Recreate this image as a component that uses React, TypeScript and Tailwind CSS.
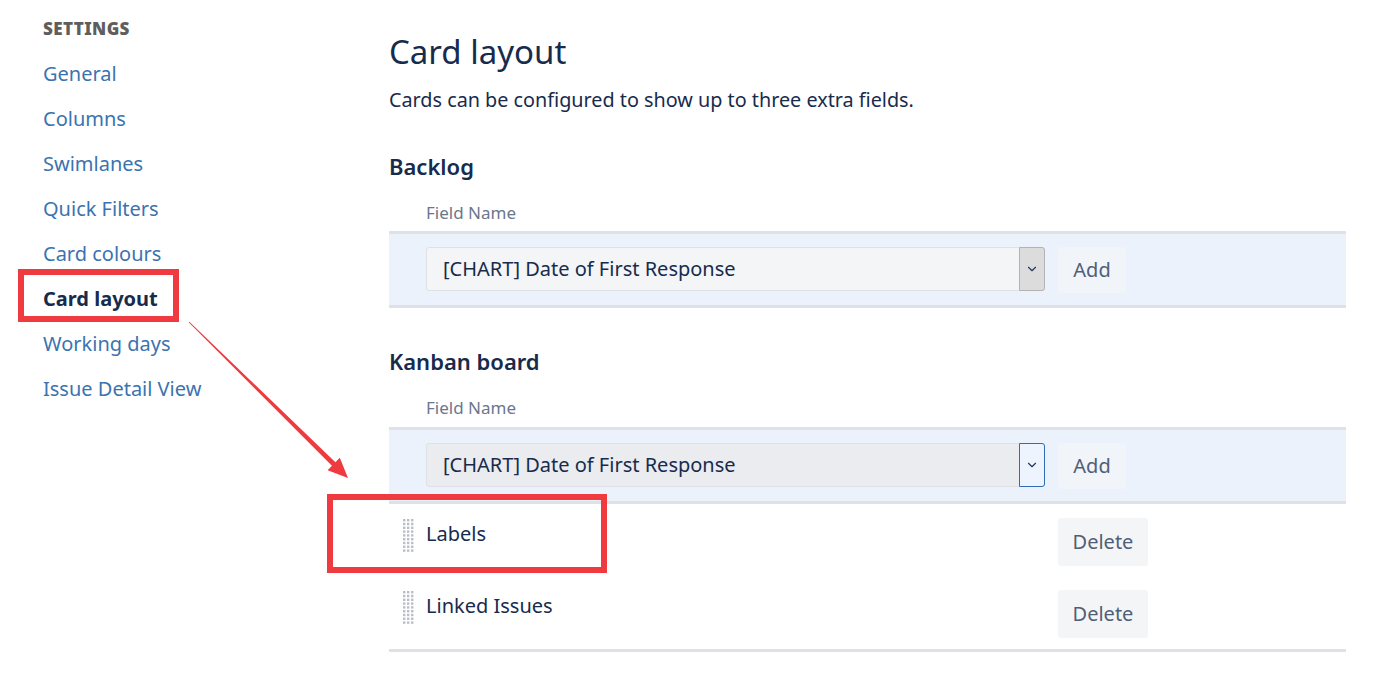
import { ChevronDown } from "lucide-react";

const nav = [
  "General",
  "Columns",
  "Swimlanes",
  "Quick Filters",
  "Card colours",
  "Card layout",
  "Working days",
  "Issue Detail View",
];

const DragHandle = () => (
  <svg width="12" height="34" viewBox="0 0 12 34" className="shrink-0">
    {Array.from({ length: 9 }).map((_, r) =>
      [0, 1, 2].map((c) => (
        <rect
          key={`${r}-${c}`}
          x={1 + c * 4}
          y={1 + r * 3.8}
          width="2.4"
          height="2.4"
          fill="#b9bfc8"
        />
      ))
    )}
  </svg>
);

const FieldSelect = ({ focused }: { focused?: boolean }) => (
  <div
    className={`flex w-[619px] h-[44px] rounded-[3px] border ${
      focused ? "bg-[#ebecf0] border-[#dfe1e6]" : "bg-[#f4f5f7] border-[#dfe1e6]"
    }`}
  >
    <span className="flex-1 flex items-center pl-[16px] text-[20px] text-[#172b4d]">
      [CHART] Date of First Response
    </span>
    <span
      className={`w-[26px] -my-px -mr-px flex items-center justify-center rounded-r-[3px] border ${
        focused ? "bg-[#eef4fd] border-[#2f6db5]" : "bg-[#dcdcdc] border-[#b3b3b3]"
      }`}
    >
      <ChevronDown size={14} strokeWidth={2} color="#253858" />
    </span>
  </div>
);

const AddRow = ({ focused }: { focused?: boolean }) => (
  <div className="flex items-start gap-[13px] bg-[#ebf2fc] border-y-[3px] border-[#dfe1e6] pl-[37px] pt-[13px] pb-[12px]">
    <FieldSelect focused={focused} />
    <button className="w-[68px] h-[46px] rounded-[3px] bg-[#f1f4f8] text-[20px] text-[#505f79]">
      Add
    </button>
  </div>
);

const FieldRow = ({ label }: { label: string }) => (
  <div className="flex items-start h-[72px] pt-[13px] pl-[13px]">
    <div className="flex items-start gap-[12px] w-[656px]">
      <DragHandle />
      <span className="text-[20px] leading-[32px] text-[#172b4d]">{label}</span>
    </div>
    <button className="w-[90px] h-[48px] rounded-[3px] bg-[#f4f5f7] text-[20px] text-[#505f79]">
      Delete
    </button>
  </div>
);

export default function App() {
  return (
    <div className="relative w-[1382px] h-[693px] bg-white flex font-['Noto_Sans',sans-serif] overflow-hidden">
      <aside className="w-[389px] shrink-0 pl-[43px] pt-[16px]">
        <div className="h-[26px] flex items-center text-[17px] font-black tracking-[0.4px] text-[#5e5e5e]">
          SETTINGS
        </div>
        <nav className="mt-[9px] flex flex-col">
          {nav.map((n) => (
            <div
              key={n}
              className={`h-[45px] flex items-center text-[20px] ${
                n === "Card layout" ? "font-bold text-[#172b4d]" : "text-[#3b73af]"
              }`}
            >
              {n}
            </div>
          ))}
        </nav>
      </aside>

      <main className="w-[957px] shrink-0">
        <h1 className="mt-[32px] text-[33px] leading-[40px] text-[#172b4d]">Card layout</h1>
        <p className="mt-[14px] text-[19.8px] leading-[28px] text-[#172b4d]">
          Cards can be configured to show up to three extra fields.
        </p>

        <h2 className="mt-[37px] text-[22px] leading-[30px] font-semibold text-[#172b4d]">Backlog</h2>
        <div className="mt-[20px] pl-[37px] text-[17px] leading-[24px] text-[#6b778c]">Field Name</div>
        <div className="mt-[6px]">
          <AddRow />
        </div>

        <h2 className="mt-[38px] text-[22px] leading-[30px] font-semibold text-[#172b4d]">Kanban board</h2>
        <div className="mt-[20px] pl-[37px] text-[17px] leading-[24px] text-[#6b778c]">Field Name</div>
        <div className="mt-[7px]">
          <AddRow focused />
        </div>
        <div className="mt-[1px] border-b-[3px] border-[#dfe1e6]">
          <FieldRow label="Labels" />
          <FieldRow label="Linked Issues" />
        </div>
      </main>

      {/* annotations */}
      <div className="absolute left-[18px] top-[269px] w-[161px] h-[53px] border-[6px] border-[#ef3b40]" />
      <div className="absolute left-[327px] top-[494px] w-[280px] h-[79px] border-[6px] border-[#ef3b40]" />
      <svg className="absolute left-0 top-0 pointer-events-none" width="1382" height="693">
        <polygon
          points="189.35,321.64 335.45,462.2 339.8,457.8 348,478 327.6,470.2 331.95,465.8 188.65,322.36"
          fill="#ef3b40"
        />
      </svg>
    </div>
  );
}
